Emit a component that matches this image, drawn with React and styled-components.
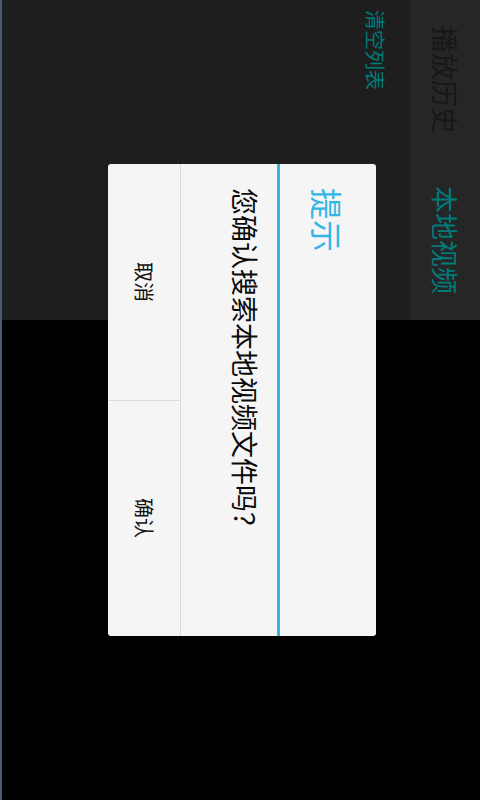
import React from "react";
import styled, { createGlobalStyle, css } from "styled-components";

const GlobalStyle = createGlobalStyle`
  html, body {
    margin: 0;
    padding: 0;
    background: #000;
  }
  * { box-sizing: border-box; }
`;

const vertical = css`
  writing-mode: vertical-rl;
  text-orientation: sideways;
  line-height: 1;
  white-space: nowrap;
`;

const Screen = styled.div`
  position: relative;
  width: 480px;
  height: 800px;
  background: #000;
  border-left: 2px solid #4b5b6c;
  overflow: hidden;
  font-family: "Noto Sans CJK SC", "Noto Sans", sans-serif;
`;

const TopArea = styled.div`
  display: flex;
  height: 320px;
`;

const ContentPane = styled.div`
  flex: 1;
  background: #1e1e1e;
  display: flex;
  justify-content: flex-end;
  align-items: flex-start;
  padding: 10px 25px 0 0;
`;

const ClearLabel = styled.div`
  ${vertical};
  font-size: 20px;
  color: #007b7b;
`;

const TabBar = styled.div`
  width: 70px;
  background: #262626;
  display: flex;
  flex-direction: column;
`;

const Tab = styled.div`
  flex: 1;
  display: flex;
  align-items: center;
  justify-content: center;
  ${vertical};
  writing-mode: horizontal-tb;
`;

const TabText = styled.span`
  ${vertical};
  font-size: 27px;
  color: ${(p) => (p.$active ? "#007b7b" : "#171717")};
`;

const Dialog = styled.div`
  position: absolute;
  left: 106px;
  top: 164px;
  width: 268px;
  height: 472px;
  background: #f5f5f5;
  border-radius: 3px;
  display: flex;
  overflow: hidden;
`;

const ButtonCol = styled.div`
  width: 73px;
  border-right: 1px solid #d9d9d9;
  display: flex;
  flex-direction: column;
`;

const DialogButton = styled.div`
  flex: 1;
  display: flex;
  align-items: center;
  justify-content: center;
  border-bottom: ${(p) => (p.$divided ? "1px solid #d9d9d9" : "none")};
`;

const ButtonText = styled.span`
  ${vertical};
  font-size: 20px;
  color: #111;
`;

const MessageCol = styled.div`
  width: 96px;
  display: flex;
  justify-content: flex-end;
  align-items: flex-start;
  padding: 24px 18px 0 0;
`;

const Message = styled.div`
  ${vertical};
  font-size: 27px;
  color: #0a0a0a;
`;

const Divider = styled.div`
  width: 3px;
  background: #33b5e5;
`;

const TitleCol = styled.div`
  flex: 1;
  display: flex;
  justify-content: center;
  align-items: flex-start;
  padding-top: 24px;
`;

const Title = styled.div`
  ${vertical};
  font-size: 32px;
  color: #33b5e5;
`;

export default function App() {
  return (
    <>
      <GlobalStyle />
      <Screen>
        <TopArea>
          <ContentPane>
            <ClearLabel>清空列表</ClearLabel>
          </ContentPane>
          <TabBar>
            <Tab>
              <TabText>播放历史</TabText>
            </Tab>
            <Tab>
              <TabText $active>本地视频</TabText>
            </Tab>
          </TabBar>
        </TopArea>
        <Dialog>
          <ButtonCol>
            <DialogButton $divided>
              <ButtonText>取消</ButtonText>
            </DialogButton>
            <DialogButton>
              <ButtonText>确认</ButtonText>
            </DialogButton>
          </ButtonCol>
          <MessageCol>
            <Message>您确认搜索本地视频文件吗？</Message>
          </MessageCol>
          <Divider />
          <TitleCol>
            <Title>提示</Title>
          </TitleCol>
        </Dialog>
      </Screen>
    </>
  );
}
